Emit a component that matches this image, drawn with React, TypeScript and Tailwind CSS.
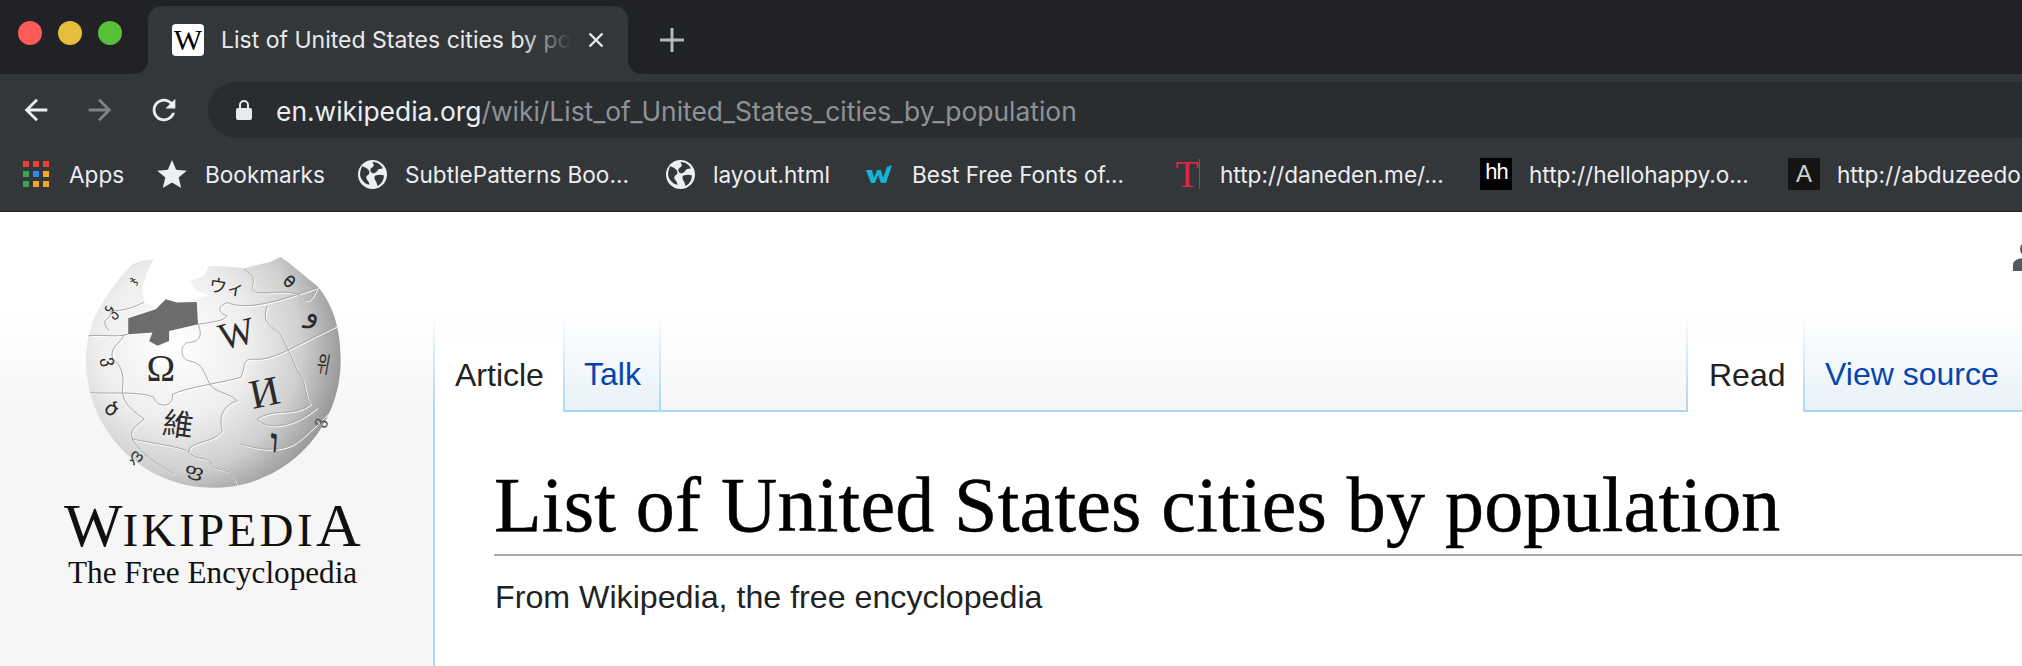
import React from 'react';

const BOOKMARKS = [
  { label: 'Apps', icon: 'apps', width: 'w-[136px]' },
  { label: 'Bookmarks', icon: 'star', width: 'w-[200px]' },
  { label: 'SubtlePatterns Boo...', icon: 'globe', width: 'w-[308px]' },
  { label: 'layout.html', icon: 'globe', width: 'w-[199px]' },
  { label: 'Best Free Fonts of...', icon: 'w', width: 'w-[308px]' },
  { label: 'http://daneden.me/...', icon: 't', width: 'w-[309px]' },
  { label: 'http://hellohappy.o...', icon: 'hh', width: 'w-[308px]' },
  { label: 'http://abduzeedo.com/', icon: 'a', width: 'w-[308px]' },
];

const APP_DOTS = ['#ea4335', '#ea4335', '#ea4335', '#34a853', '#2a8af0', '#f5a623', '#34a853', '#f5a623', '#f5a623'];

const PUZZLE_LINES = [
  'M472 280C490 320 470 335 440 335 415 345 420 385 445 390 480 395 490 420 500 445 515 490 560 480 590 510 560 520 530 545 545 600 520 640 440 630 445 665 460 690 510 675 515 705 525 725 570 700 590 770',
  'M140 315C180 310 230 320 262 310M250 310C240 340 205 345 215 385 240 400 250 430 245 470 240 520 285 545 310 565 280 590 265 600 275 625 300 670 350 700 400 730 430 770',
  'M145 485C200 490 300 480 340 500 345 530 400 535 395 490 440 470 520 460 600 440 620 400 600 385 640 385 700 390 750 350 890 285',
  'M472 280C510 275 550 270 560 255 530 245 530 225 560 215 620 240 720 210 830 170M680 225C660 280 700 290 720 310 740 350 760 390 770 420 800 450 790 490 810 520 760 560 700 530 650 565 680 600 760 590 830 530',
  'M610 115C670 150 610 170 650 185 700 190 760 170 790 205 810 225 830 170 830 170',
  'M205 300C170 260 215 270 210 240 270 240 300 215 310 215',
  'M600 640C640 650 700 670 760 640 790 620 820 590 870 540M275 625C350 640 430 650 445 665',
];

function BookmarkIcon({ icon }: { icon: string }) {
  if (icon === 'apps') {
    return (
      <div className="w-[26px] grid grid-cols-3 gap-[4px]">
        {APP_DOTS.map((c, i) => (
          <span key={i} className="h-[6px] w-[6px]" style={{ backgroundColor: c }} />
        ))}
      </div>
    );
  }
  if (icon === 'star') {
    return (
      <svg viewBox="0 0 24 24" className="w-[32px] h-[32px] fill-[#eceef1]">
        <path d="M12 1.500l3.100 7.400 8 .6-6.100 5.200 1.900 7.800-6.900-4.200-6.900 4.200 1.900-7.800-6.100-5.200 8-.6z" />
      </svg>
    );
  }
  if (icon === 'globe') {
    return (
      <svg viewBox="0 0 28 28" className="w-[29px] h-[29px]">
        <circle cx="14" cy="14" r="14" fill="#eceef1" />
        <path d="M4 6c3 1 7 3 7 6s-3 2-3 5 3 3 3 7c-5-1-9-6-9-10 0-3 1-6 2-8zM14 2c4 0 8 2 10 6-2 1-4 0-5 2s-4 4-6 2-1-4 1-5 1-3 0-5zM17 15c3-1 6-1 8 0 0 4-2 8-6 10-1-2-1-4-2-5s-2-4 0-5z" fill="#33373a" />
      </svg>
    );
  }
  if (icon === 'w') {
    return (
      <svg viewBox="0 0 28 20" className="w-[28px] h-[20px]">
        <path d="M1 6h6l2 8 3-8h4l2 8 4-11 5-2-6 18h-5l-3-8-3 8H6z" fill="#12b5d6" />
      </svg>
    );
  }
  if (icon === 't') {
    return (
      <div className="relative w-[26px] h-[30px] flex items-center justify-center font-['Liberation_Serif',serif] text-[38px] leading-none text-[#e0244a]">
        T
        <span className="absolute right-0 top-0 h-full w-[1px] bg-[#e0244a]" />
      </div>
    );
  }
  if (icon === 'hh') {
    return (
      <div className="w-[32px] h-[32px] bg-black text-white flex items-center justify-center font-['Liberation_Mono',monospace] text-[22px] leading-none tracking-[-2px]">
        hh
      </div>
    );
  }
  return (
    <div className="w-[32px] h-[32px] bg-[#141414] text-[#cfcfcf] flex items-center justify-center font-['Liberation_Sans',sans-serif] text-[24px] leading-none">
      A
    </div>
  );
}

// Rough redraw of the puzzle globe, coordinates follow the logo crop
function PuzzleGlobe() {
  return (
    <svg viewBox="120 60 800 730" preserveAspectRatio="none" className="w-[266px] h-[243px] block">
      <defs>
        <radialGradient id="sphere" gradientUnits="userSpaceOnUse" cx="400" cy="340" r="510">
          <stop offset="0" stopColor="#ffffff" />
          <stop offset="0.45" stopColor="#eeeeee" />
          <stop offset="0.75" stopColor="#cfcfcf" />
          <stop offset="1" stopColor="#989898" />
        </radialGradient>
        <clipPath id="ball">
          <circle cx="518" cy="388" r="383" />
        </clipPath>
      </defs>
      <path
        d="M135 388C135 300 170 215 255 120L275 100 300 90 338 85 320 120 305 170 310 215 345 232 375 205 410 215 505 195 470 180 448 150 490 135 505 105 540 105 610 112 690 92 720 78 745 95 830 165C880 220 901 300 901 388 901 600 730 771 518 771 306 771 135 600 135 388Z"
        fill="url(#sphere)"
      />
      <path
        d="M262 262L345 235 375 205 408 215 468 213 472 280 385 300 385 330 350 345 325 330 335 305 262 310Z"
        fill="#6c6c6c"
      />
      <g fill="none" stroke="#ffffff" strokeWidth="3" clipPath="url(#ball)" transform="translate(3 3)">
        {PUZZLE_LINES.map((d) => (
          <path key={d} d={d} />
        ))}
      </g>
      <g fill="none" stroke="#a8a8a8" strokeWidth="3" clipPath="url(#ball)">
        {PUZZLE_LINES.map((d) => (
          <path key={d} d={d} />
        ))}
      </g>
      <g fill="#2b2b2b" textAnchor="middle">
        <text x="360" y="452" fontSize="116" fontFamily="'Liberation Serif', serif">Ω</text>
        <text transform="translate(597 345) rotate(-14)" fontSize="114" fontFamily="'Liberation Serif', serif">W</text>
        <text transform="translate(680 525) rotate(-12)" fontSize="124" fontFamily="'Liberation Serif', serif">И</text>
        <text transform="translate(408 614) rotate(8)" fontSize="92" fontFamily="'Noto Sans CJK TC', sans-serif">維</text>
        <text transform="translate(556 188) rotate(8)" fontSize="54" fontFamily="'Noto Sans CJK JP', sans-serif">ウィ</text>
        <text transform="translate(700 665) rotate(4)" fontSize="100" fontFamily="'DejaVu Serif', serif" fontWeight="700">ו</text>
        <text transform="translate(812 275) rotate(14)" fontSize="86" fontFamily="'DejaVu Sans', sans-serif">و</text>
        <text transform="translate(845 425) rotate(10) scale(0.6 1)" fontSize="70" fontFamily="'Noto Sans CJK KR', sans-serif">위</text>
        <text transform="translate(735 165) rotate(40) scale(0.8 1)" fontSize="66" fontFamily="'DejaVu Sans', sans-serif">ө</text>
        <text transform="translate(190 395) rotate(80)" fontSize="54" fontFamily="'DejaVu Sans', sans-serif">ვ</text>
        <text transform="translate(200 550) rotate(40)" fontSize="60" fontFamily="'DejaVu Sans', sans-serif">ծ</text>
        <text transform="translate(222 255) rotate(-40)" fontSize="48" fontFamily="'DejaVu Sans', sans-serif">ჴ</text>
        <text transform="translate(285 155) rotate(-55)" fontSize="36" fontFamily="'DejaVu Sans', sans-serif">ჯ</text>
        <text transform="translate(458 735) rotate(15) scale(1.4 1)" fontSize="50" fontFamily="'DejaVu Sans', sans-serif">ფ</text>
        <text transform="translate(280 690) rotate(35)" fontSize="50" fontFamily="'DejaVu Sans', sans-serif">ღ</text>
        <text transform="translate(850 580) rotate(-70)" fontSize="50" fill="#555" fontFamily="'DejaVu Sans', sans-serif">ვ</text>
      </g>
    </svg>
  );
}

export default function App() {
  const chrome = "font-['Inter','Liberation_Sans',sans-serif]";
  const wiki = "font-['Liberation_Sans',Arial,sans-serif]";

  return (
    <div className="w-[2022px] h-[666px] overflow-hidden flex flex-col bg-white">
      {/* Browser tab strip */}
      <div className={`flex h-[74px] bg-[#202226] ${chrome}`}>
        <div className="w-[148px] bg-[#33373a]">
          <div className="h-full bg-[#202226] rounded-br-[14px] flex items-center gap-[16px] pl-[18px] pb-[8px]">
            <span className="w-[24px] h-[24px] rounded-full bg-[#fc5b57]" />
            <span className="w-[24px] h-[24px] rounded-full bg-[#e5bf3c]" />
            <span className="w-[24px] h-[24px] rounded-full bg-[#57c038]" />
          </div>
        </div>
        <div className="w-[480px] mt-[6px] bg-[#33373a] rounded-t-[14px] flex items-center pl-[24px]">
          <div className="w-[32px] h-[32px] rounded-[4px] bg-white flex items-center justify-center font-['Liberation_Serif',serif] text-[30px] leading-none text-black">
            W
          </div>
          <div className="relative ml-[17px] w-[350px] overflow-hidden whitespace-nowrap text-[23px] text-[#e8eaed]">
            List of United States cities by population
            <span className="absolute right-0 top-0 h-full w-[50px] bg-gradient-to-r from-transparent to-[#33373a]" />
          </div>
          <svg viewBox="0 0 16 16" className="w-[16px] h-[16px] ml-[17px]" fill="none" stroke="#e8eaed" strokeWidth="2.4">
            <path d="M1.500 1.500l13 13M14.500 1.500l-13 13" />
          </svg>
        </div>
        <div className="flex-1 bg-[#33373a]">
          <div className="h-full bg-[#202226] rounded-bl-[14px] pl-[32px] pt-[28px]">
            <svg viewBox="0 0 24 24" className="w-[24px] h-[24px]" fill="none" stroke="#b4b7bb" strokeWidth="3">
              <path d="M12 0v24M0 12h24" />
            </svg>
          </div>
        </div>
      </div>

      {/* Address toolbar */}
      <div className={`flex h-[64px] pt-[8px] pl-[4px] bg-[#33373a] ${chrome}`}>
        <div className="w-[64px] flex items-center justify-center">
          <svg viewBox="0 0 24 24" className="w-[34px] h-[34px] fill-[#eceef1]">
            <path d="M20 11H7.830l5.590-5.590L12 4l-8 8 8 8 1.410-1.410L7.830 13H20v-2z" />
          </svg>
        </div>
        <div className="w-[64px] flex items-center justify-center">
          <svg viewBox="0 0 24 24" className="w-[34px] h-[34px] fill-[#808386]">
            <path d="M4 11h12.170l-5.590-5.590L12 4l8 8-8 8-1.410-1.410L16.170 13H4v-2z" />
          </svg>
        </div>
        <div className="w-[64px] flex items-center justify-center">
          <svg viewBox="0 0 24 24" className="w-[34px] h-[34px] fill-[#eceef1]">
            <path d="M17.650 6.350C16.200 4.900 14.210 4 12 4c-4.420 0-7.990 3.580-7.990 8s3.570 8 7.990 8c3.730 0 6.840-2.550 7.730-6h-2.080c-.82 2.330-3.040 4-5.650 4-3.310 0-6-2.690-6-6s2.690-6 6-6c1.660 0 3.140.69 4.220 1.780L13 11h7V4l-2.350 2.350z" />
          </svg>
        </div>
        <div className="flex-1 ml-[12px] rounded-l-[28px] bg-[#2a2d30] flex items-center pl-[28px] text-[26.400px] leading-none">
          <svg viewBox="0 0 16 20" className="w-[16px] h-[20px] fill-[#e8eaed]">
            <path d="M3 8V5a5 5 0 0 1 10 0v3h1a2 2 0 0 1 2 2v8a2 2 0 0 1-2 2H2a2 2 0 0 1-2-2v-8a2 2 0 0 1 2-2zm2 0h6V5a3 3 0 0 0-6 0z" />
          </svg>
          <span className="ml-[24px] pt-[2px] text-[#eceef1]">en.wikipedia.org</span>
          <span className="pt-[2px] text-[#8f9296]">/wiki/List_of_United_States_cities_by_population</span>
        </div>
      </div>

      {/* Bookmarks bar */}
      <div className={`flex h-[74px] pl-[20px] items-center bg-[#33373a] border-b border-[#222426] whitespace-nowrap text-[22.600px] text-[#eceef1] ${chrome}`}>
        {BOOKMARKS.map((b) => (
          <div key={b.label} className={`flex items-center gap-[17px] shrink-0 ${b.width}`}>
            <div className="w-[32px] h-[32px] flex items-center justify-center">
              <BookmarkIcon icon={b.icon} />
            </div>
            <span>{b.label}</span>
          </div>
        ))}
      </div>

      {/* Wikipedia page */}
      <div className={`flex flex-1 min-h-0 ${wiki}`}>
        <aside className="w-[433px] shrink-0 pt-[39px] bg-[linear-gradient(#ffffff_100px,#f6f6f6_200px)]">
          <div className="ml-[81px]">
            <PuzzleGlobe />
          </div>
          <div className="ml-[64px] mt-[6px] h-[50px] flex items-baseline font-['Liberation_Serif',serif] text-[#111] leading-[50px] whitespace-nowrap">
            <span className="text-[62px]">W</span>
            <span className="text-[47px] tracking-[3.400px]">IKIPEDI</span>
            <span className="text-[62px]">A</span>
          </div>
          <div className="ml-[68px] mt-[6px] font-['Liberation_Serif',serif] text-[31.200px] leading-[34px] text-[#111] whitespace-nowrap">
            The Free Encyclopedia
          </div>
        </aside>

        <main className="flex-1 min-w-0 flex flex-col">
          <div className="h-[200px] flex flex-col bg-[linear-gradient(#ffffff_100px,#f6f6f6_200px)]">
            <div className="h-[102px] flex justify-end pt-[29px]">
              <svg viewBox="0 0 30 30" className="w-[30px] h-[30px] mr-[-21px] shrink-0 fill-[#54595d]">
                <circle cx="15" cy="8" r="8" />
                <path d="M0 30v-6c0-5 6-7 15-7s15 2 15 7v6z" />
              </svg>
            </div>
            <div className="flex-1 flex text-[32px] leading-none">
              <div className="w-[2px] bg-gradient-to-b from-transparent to-[#a7d7f9]" />
              <div className="w-[128px] bg-gradient-to-b from-transparent to-white to-30% flex items-center pl-[20px] pt-[23px] text-[#222]">Article</div>
              <div className="w-[2px] bg-gradient-to-b from-transparent to-[#a7d7f9]" />
              <div className="w-[94px] flex items-center pl-[19px] pt-[23px] text-[#0645ad] border-b-2 border-[#a7d7f9] bg-gradient-to-b from-white to-[#e8f2f8]">
                Talk
              </div>
              <div className="w-[2px] bg-gradient-to-b from-transparent to-[#a7d7f9]" />
              <div className="flex-1 border-b-2 border-[#a7d7f9]" />
              <div className="w-[2px] bg-gradient-to-b from-transparent to-[#a7d7f9]" />
              <div className="w-[115px] bg-gradient-to-b from-transparent to-white to-30% flex items-center pl-[21px] pt-[23px] text-[#222]">Read</div>
              <div className="w-[2px] bg-gradient-to-b from-transparent to-[#a7d7f9]" />
              <div className="w-[217px] flex items-center pl-[20px] pt-[23px] text-[#0645ad] border-b-2 border-[#a7d7f9] bg-gradient-to-b from-white to-[#e8f2f8]">
                View source
              </div>
            </div>
          </div>
          <div className="flex-1 border-l-2 border-[#a7d7f9] bg-white pl-[59px]">
            <h1 className="h-[144px] border-b-2 border-[#a2a9b1] pt-[50px] font-['Liberation_Serif',serif] text-[78px] leading-[86px] tracking-[0.200px] [-webkit-text-stroke:0.5px_black] text-black whitespace-nowrap">
              List of United States cities by population
            </h1>
            <p className="mt-[23px] pl-[1px] text-[32.200px] leading-[36px] text-[#222]">From Wikipedia, the free encyclopedia</p>
          </div>
        </main>
      </div>
    </div>
  );
}
